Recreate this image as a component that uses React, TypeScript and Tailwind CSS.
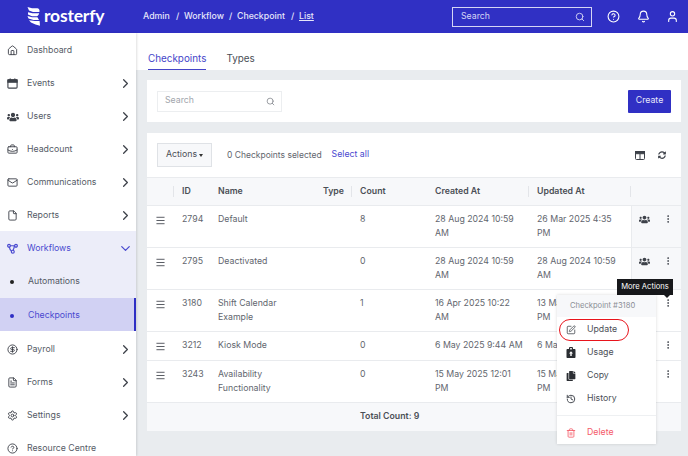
import React from "react";
import { House, BriefcaseBusiness, Mail, File, ChevronRight, ChevronDown, CircleDollarSign, FileText, Settings, CircleHelp, Search, Bell, User, SquarePen, History, Trash2, EllipsisVertical, Menu } from "lucide-react";
import { FaUsers, FaCopy, FaSyncAlt } from "react-icons/fa";

const font = "font-['Inter','Liberation_Sans',sans-serif]";

function Logo() {
  return (
    <svg width="13" height="19" viewBox="0 0 13 19" className="shrink-0" fill="#fff">
      <path d="M0.5 0 L5 1.3 L10.5 1.3 C12.4 1.6 12.9 3.6 12.4 5 L6 5 L2 3.6 Z" />
      <path d="M1 5.2 L5.5 6.2 L12.2 6.2 C11.8 7.6 11.2 8.6 10 9.2 L5 9.2 L1 7.4 Z" />
      <path d="M0.5 9 L5 10.2 L10.5 10.2 L12 13 L6.5 13 L1.5 11.6 Z" />
      <path d="M2 13.2 L8 14 L12.6 14 L13 18.8 L8.5 17.4 L4 15.4 Z" />
    </svg>
  );
}

function WorkflowIcon() {
  return (
    <svg width="11" height="11" viewBox="0 0 12 12" fill="none" stroke="currentColor" strokeWidth="1.3">
      <circle cx="2.2" cy="3" r="1.5" />
      <circle cx="9.8" cy="3" r="1.5" />
      <circle cx="6.3" cy="9.5" r="1.6" />
      <path d="M3.7 3 H8.3 M2.6 4.5 C3 7 4 8.6 5 9 M8 3 C8 5 7.4 6.5 6.6 8" />
    </svg>
  );
}

function CalendarIcon() {
  return (
    <svg width="11" height="11" viewBox="0 0 12 12" fill="none" stroke="currentColor" strokeWidth="1.2">
      <rect x="1" y="2" width="10" height="9" rx="1" />
      <rect x="1" y="2" width="10" height="2.6" fill="currentColor" />
      <path d="M3.5 0.5 V2.5 M8.5 0.5 V2.5" strokeWidth="1.4" />
    </svg>
  );
}

function ColumnsIcon() {
  return (
    <svg width="10" height="9" viewBox="0 0 10 9" fill="none" stroke="currentColor" strokeWidth="1">
      <rect x="0.5" y="0.5" width="9" height="8" rx="1" />
      <rect x="0.5" y="0.5" width="9" height="2.2" fill="currentColor" />
      <path d="M5 2.5 V8.5" />
    </svg>
  );
}

function UsageIcon() {
  return (
    <svg width="10" height="11" viewBox="0 0 10 11" fill="currentColor">
      <path d="M1.5 2 H3 V1.2 C3 0.5 3.5 0 4.2 0 H5.8 C6.5 0 7 0.5 7 1.2 V2 H8.5 C9.1 2 9.5 2.4 9.5 3 V10 C9.5 10.6 9.1 11 8.5 11 H1.5 C0.9 11 0.5 10.6 0.5 10 V3 C0.5 2.4 0.9 2 1.5 2 Z M4.2 1 V2.4 H5.8 V1 Z" fillRule="evenodd" />
      <path d="M5 4.2 L7 6.4 H5.7 V9 H4.3 V6.4 H3 Z" fill="#fff" />
    </svg>
  );
}

function NavItem({ icon, label, arrow = true }: { icon: React.ReactNode; label: string; arrow?: boolean }) {
  return (
    <div className="h-[33px] flex items-center pl-[7px] pr-[3px] pt-[2px] text-[#555b66]">
      <span className="w-[20px] flex justify-start text-[#3d4149]">{icon}</span>
      <span className="flex-1 text-[8.75px]">{label}</span>
      {arrow && <ChevronRight size={15} strokeWidth={2} className="text-[#3d4149]" />}
    </div>
  );
}

function Sidebar() {
  const s = 11;
  return (
    <aside className="w-[136px] h-[423px] bg-white shrink-0 overflow-hidden shadow-[1px_0_2px_rgba(0,0,0,0.12)] z-10">
      <NavItem icon={<House size={s} />} label="Dashboard" arrow={false} />
      <NavItem icon={<CalendarIcon />} label="Events" />
      <NavItem icon={<FaUsers size={12} />} label="Users" />
      <NavItem icon={<BriefcaseBusiness size={s} />} label="Headcount" />
      <NavItem icon={<Mail size={s} />} label="Communications" />
      <NavItem icon={<File size={s} />} label="Reports" />
      <div className="bg-[#ecedf9]">
        <div className="h-[33px] flex items-center pl-[7px] pr-[3px] pt-[2px] text-[#4a4ad0]">
          <span className="w-[20px] flex"><WorkflowIcon /></span>
          <span className="flex-1 text-[8.75px]">Workflows</span>
          <ChevronDown size={15} />
        </div>
        <div className="h-[34px] flex items-center pl-[10px] pt-[2px] text-[#555b66]">
          <span className="w-[4px] h-[4px] rounded-full bg-[#222] mr-[14px]" />
          <span className="text-[8.75px]">Automations</span>
        </div>
      </div>
      <div className="h-[33px] flex items-center pl-[10px] pt-[2px] bg-[#d1d1f3] border-r-2 border-[#2f2fc4] text-[#4a4ad0]">
        <span className="w-[4px] h-[4px] rounded-full bg-[#2f2fc4] mr-[14px]" />
        <span className="text-[8.75px]">Checkpoints</span>
      </div>
      <div className="pt-[1px]">
        <NavItem icon={<CircleDollarSign size={s} />} label="Payroll" />
        <NavItem icon={<FileText size={s} />} label="Forms" />
        <NavItem icon={<Settings size={s} />} label="Settings" />
        <NavItem icon={<CircleHelp size={s} />} label="Resource Centre" arrow={false} />
      </div>
    </aside>
  );
}

type Row = { id: string; name: string; count: string; created: string; updated: string; h: string };
const rows: Row[] = [
  { id: "2794", name: "Default", count: "8", created: "28 Aug 2024 10:59 AM", updated: "26 Mar 2025 4:35 PM", h: "h-[41px]" },
  { id: "2795", name: "Deactivated", count: "0", created: "28 Aug 2024 10:59 AM", updated: "28 Aug 2024 10:59 AM", h: "h-[41px]" },
  { id: "3180", name: "Shift Calendar Example", count: "1", created: "16 Apr 2025 10:22 AM", updated: "13 May 2025 4:35 PM", h: "h-[41px]" },
  { id: "3212", name: "Kiosk Mode", count: "0", created: "6 May 2025 9:44 AM", updated: "6 May 2025 9:44 AM", h: "h-[28px]" },
  { id: "3243", name: "Availability Functionality", count: "0", created: "15 May 2025 12:01 PM", updated: "15 May 2025 12:01 PM", h: "h-[41px]" },
];
const gridCols = "grid grid-cols-[27px_8px_36px_106px_36px_75px_102px_94px_50px]";

function TableRow({ r, i }: { r: Row; i: number }) {
  return (
    <div className={`${gridCols} ${r.h} border-b-[1px] border-[#e9ebee] box-content text-[8.75px] leading-[13.5px] text-[#62666e]`}>
      <div className="flex justify-center pt-[9px] text-[#4b4f56]"><Menu size={11} /></div>
      <div />
      <div className="pt-[7px]">{r.id}</div>
      <div className="pt-[7px] pr-[30px]">{r.name}</div>
      <div />
      <div className="pt-[7px]">{r.count}</div>
      <div className="pt-[7px] pr-[12px]">{r.created}</div>
      <div className="pt-[7px] pr-[6px]">{r.updated}</div>
      <div className={`flex justify-end gap-[13px] pt-[8px] pr-[8px] ${i < 2 ? "bg-[#f7f8fa] border-l border-[#e9ebee]" : ""}`}>
        {i < 2 && <FaUsers size={11} className="text-[#3d4149]" />}
        <EllipsisVertical size={10} className="text-[#3d4149]" />
      </div>
    </div>
  );
}

function MenuRow({ icon, label, danger }: { icon: React.ReactNode; label: string; danger?: boolean }) {
  return (
    <div className={`h-[23px] flex items-center pl-[9px] text-[8.75px] ${danger ? "text-[#f45b69]" : "text-[#4b4f56]"}`}>
      <span className="w-[21px] flex">{icon}</span>
      <span>{label}</span>
    </div>
  );
}

export default function App() {
  return (
    <div className={`${font} w-[688px] h-[456px] overflow-hidden bg-[#e9ecef] relative`}>
      <header className="h-[33px] bg-[#3030c4] flex items-center text-white">
        <div className="w-[143px] pl-[27px] flex items-center gap-[4px] shrink-0">
          <Logo />
          <span className="text-[17.5px] font-bold leading-none tracking-[-0.2px] font-['Lato',sans-serif] pb-[1px]">rosterfy</span>
        </div>
        <nav className="flex items-center text-[8.75px] font-medium text-[#e6e6fa]">
          <span className="w-[33px]">Admin</span>
          <span className="w-[8px]">/</span><span className="w-[45px]">Workflow</span>
          <span className="w-[8px]">/</span><span className="w-[54px]">Checkpoint</span>
          <span className="w-[8px]">/</span><span className="underline">List</span>
        </nav>
        <div className="ml-auto flex items-center pr-[9px]">
          <div className="w-[140px] h-[20px] border border-[#d5d5f5] flex items-center justify-between pl-[8px] pr-[6px] text-[8.75px] text-[#d5d5f5]">
            <span>Search</span>
            <Search size={10} strokeWidth={2.2} />
          </div>
          <CircleHelp size={13} className="ml-[15px]" />
          <Bell size={13} className="ml-[17px]" />
          <User size={13} className="ml-[16px]" />
        </div>
      </header>
      <div className="flex">
        <Sidebar />
        <main className="flex-1 min-w-0">
          <div className="h-[37px] bg-white flex pl-[12px] gap-[20px] text-[9.9px]">
            <div className="h-[37px] pt-[18px] leading-[14px] text-[#4545c9] border-b border-[#4545c9]">Checkpoints</div>
            <div className="h-[37px] pt-[18px] leading-[14px] text-[#4b4f56]">Types</div>
          </div>
          <div className="ml-[11px] mr-[7px] mt-[10px] h-[42px] bg-white flex items-center justify-between pl-[10px] pr-[10px]">
            <div className="w-[125px] h-[21px] border border-[#eceef0] flex items-center justify-between pl-[7px] pr-[6px] text-[8.75px] text-[#a2a6ad]">
              <span>Search</span>
              <Search size={9} className="text-[#7b7f86]" />
            </div>
            <div className="w-[43px] h-[23px] bg-[#3030c4] rounded-[1px] text-[8.75px] text-[#e6e6fa] flex items-center justify-center">Create</div>
          </div>
          <div className="ml-[11px] mr-[7px] mt-[11px] bg-white">
            <div className="h-[44px] flex items-center pl-[10px] pr-[15px] text-[8.75px] text-[#62666e]">
              <div className="w-[55px] h-[24px] bg-[#f7f8fa] border border-[#dfe2e6] flex items-center justify-center text-[#4b4f56]">
                Actions<span className="ml-[2px] border-x-[2.5px] border-x-transparent border-t-[3px] border-t-[#333]" />
              </div>
              <span className="ml-[15px] text-[8.5px]">0 Checkpoints selected</span>
              <span className="ml-[10px] text-[#4a4ad0]">Select all</span>
              <div className="ml-auto flex items-center gap-[13px] text-[#3d4149]">
                <ColumnsIcon />
                <FaSyncAlt size={8} />
              </div>
            </div>
            <div className={`${gridCols} h-[27px] items-center bg-[#f7f8fa] border-y border-[#e9ebee] box-content text-[8.75px] font-semibold text-[#4b4f56]`}>
              <div className="border-r border-[#e3e5e9] h-[11px]" />
              <div />
              <div>ID</div>
              <div>Name</div>
              <div className="border-r border-[#e3e5e9] h-[11px] flex items-center justify-end pr-[7px] mr-[8px] whitespace-nowrap">Type</div>
              <div>Count</div>
              <div className="border-r border-[#e3e5e9] h-[11px] flex items-center mr-[8px]">Created At</div>
              <div className="h-[11px] flex items-center border-r border-[#e3e5e9]">Updated At</div>
              <div />
            </div>
            {rows.map((r, i) => <TableRow key={r.id} r={r} i={i} />)}
            <div className="h-[28px] bg-[#f7f8fa] flex items-center pl-[213px] text-[8.75px] font-semibold text-[#4b4f56]">Total Count: 9</div>
          </div>
        </main>
      </div>

      <div className="absolute left-[617px] top-[279px] w-[56px] h-[16px] bg-[#17181b] text-white text-[7.6px] flex items-center justify-center whitespace-nowrap">More Actions</div>
      <div className="absolute left-[664px] top-[295px] border-x-[3px] border-x-transparent border-t-[3px] border-t-[#17181b]" />

      <div className="absolute left-[557px] top-[295px] w-[99px] h-[149px] bg-white shadow-[0_0_3px_rgba(0,0,0,0.15)]">
        <div className="h-[22px] bg-[#f7f8fa] flex items-center pl-[13px] text-[7.6px] text-[#8a8e95]">Checkpoint #3180</div>
        <div className="pt-[1px]">
          <MenuRow icon={<SquarePen size={10} />} label="Update" />
          <MenuRow icon={<span className="text-[#2b2e33]"><UsageIcon /></span>} label="Usage" />
          <MenuRow icon={<FaCopy size={10} className="text-[#2b2e33]" />} label="Copy" />
          <MenuRow icon={<History size={10} strokeWidth={2.4} />} label="History" />
        </div>
        <div className="border-t border-[#eef0f2] mt-[5px] pt-[5px]">
          <MenuRow icon={<Trash2 size={10} />} label="Delete" danger />
        </div>
      </div>
      <div className="absolute left-[559px] top-[319px] w-[70px] h-[22px] border-[1.5px] border-[#e8141c] rounded-full" />
    </div>
  );
}
